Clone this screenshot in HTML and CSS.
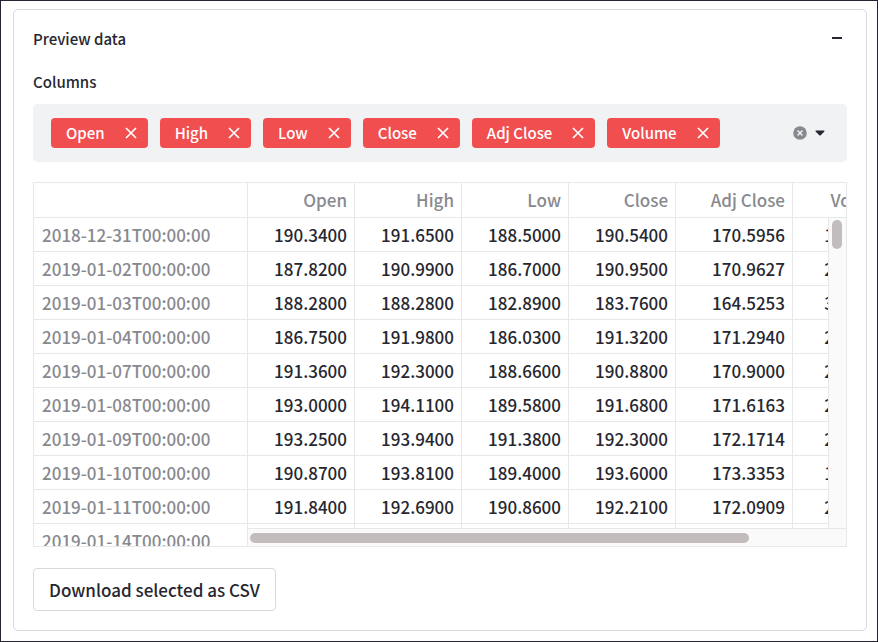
FILE: index.html
```html
<!DOCTYPE html>
<html lang="en">
<head>
<meta charset="utf-8">
<title>Preview data</title>
<link rel="stylesheet" href="styles.css">
</head>
<body>
<svg width="0" height="0" class="sprite" aria-hidden="true">
  <symbol id="cross" viewBox="0 0 12 12"><path d="M1 1L11 11M11 1L1 11" stroke="currentColor" stroke-width="1.7" fill="none"/></symbol>
</svg>
<main class="panel">
  <header class="panel-head">
    <h1 class="title">Preview data</h1>
    <button class="icon-button collapse" aria-label="Collapse"><svg width="10" height="10" viewBox="0 0 10 10"><path d="M0 4H10" stroke="currentColor" stroke-width="2"/></svg></button>
  </header>
  <h2 class="label" id="columns-label">Columns</h2>
  <div class="multiselect" role="group" aria-labelledby="columns-label">
    <ul class="tags">
      <li class="tag">Open<button class="icon-button" aria-label="Remove Open"><svg width="12" height="12"><use href="#cross"/></svg></button></li>
      <li class="tag">High<button class="icon-button" aria-label="Remove High"><svg width="12" height="12"><use href="#cross"/></svg></button></li>
      <li class="tag">Low<button class="icon-button" aria-label="Remove Low"><svg width="12" height="12"><use href="#cross"/></svg></button></li>
      <li class="tag">Close<button class="icon-button" aria-label="Remove Close"><svg width="12" height="12"><use href="#cross"/></svg></button></li>
      <li class="tag">Adj Close<button class="icon-button" aria-label="Remove Adj Close"><svg width="12" height="12"><use href="#cross"/></svg></button></li>
      <li class="tag">Volume<button class="icon-button" aria-label="Remove Volume"><svg width="12" height="12"><use href="#cross"/></svg></button></li>
    </ul>
    <button class="icon-button" aria-label="Clear all"><svg width="14" height="14" viewBox="0 0 14 14"><circle cx="7" cy="7" r="6.8" fill="#88898f"/><path d="M4.6 4.6L9.4 9.4M9.4 4.6L4.6 9.4" stroke="#f0f2f4" stroke-width="1.4"/></svg></button>
    <button class="icon-button" aria-label="Show options"><svg width="10" height="6" viewBox="0 0 10 6"><path d="M1 .5H9Q10 .9 9.2 1.7L5.7 5.2Q5 5.8 4.3 5.2L.8 1.7Q0 .9 1 .5Z" fill="#262730"/></svg></button>
  </div>
  <div class="grid">
    <table>
      <colgroup><col class="c-date"><col><col><col><col><col class="c-adj"><col></colgroup>
      <thead><tr><th></th><th>Open</th><th>High</th><th>Low</th><th>Close</th><th>Adj Close</th><th>Volume</th></tr></thead>
      <tbody>
        <tr><th>2018-12-31T00:00:00</th><td>190.3400</td><td>191.6500</td><td>188.5000</td><td>190.5400</td><td>170.5956</td><td>1866400</td></tr>
        <tr><th>2019-01-02T00:00:00</th><td>187.8200</td><td>190.9900</td><td>186.7000</td><td>190.9500</td><td>170.9627</td><td>2475200</td></tr>
        <tr><th>2019-01-03T00:00:00</th><td>188.2800</td><td>188.2800</td><td>182.8900</td><td>183.7600</td><td>164.5253</td><td>3358200</td></tr>
        <tr><th>2019-01-04T00:00:00</th><td>186.7500</td><td>191.9800</td><td>186.0300</td><td>191.3200</td><td>171.2940</td><td>2995100</td></tr>
        <tr><th>2019-01-07T00:00:00</th><td>191.3600</td><td>192.3000</td><td>188.6600</td><td>190.8800</td><td>170.9000</td><td>2162200</td></tr>
        <tr><th>2019-01-08T00:00:00</th><td>193.0000</td><td>194.1100</td><td>189.5800</td><td>191.6800</td><td>171.6163</td><td>2479800</td></tr>
        <tr><th>2019-01-09T00:00:00</th><td>193.2500</td><td>193.9400</td><td>191.3800</td><td>192.3000</td><td>172.1714</td><td>2290400</td></tr>
        <tr><th>2019-01-10T00:00:00</th><td>190.8700</td><td>193.8100</td><td>189.4000</td><td>193.6000</td><td>173.3353</td><td>1704100</td></tr>
        <tr><th>2019-01-11T00:00:00</th><td>191.8400</td><td>192.6900</td><td>190.8600</td><td>192.2100</td><td>172.0909</td><td>2014700</td></tr>
        <tr><th>2019-01-14T00:00:00</th><td>190.8900</td><td>191.3900</td><td>189.0200</td><td>190.2200</td><td>170.3091</td><td>2275300</td></tr>
      </tbody>
    </table>
    <div class="track track-y"><div class="thumb"></div></div>
    <div class="track track-x"><div class="thumb"></div></div>
  </div>
  <button class="download">Download selected as CSV</button>
</main>
</body>
</html>
```
FILE: styles.css
```css
* { box-sizing: border-box; }

body {
  margin: 0;
  min-height: 100vh;
  padding: 8px 10px 10px 12px;
  border: 1px solid #262432;
  background: #fff;
  color: #262730;
  font: 500 15px/24px "Noto Sans CJK SC", "Noto Sans", sans-serif;
}

.sprite { position: absolute; }

.panel {
  padding: 17px 19px 19px;
  border: 1px solid #dad8d9;
  border-radius: 5px;
}

.panel-head {
  display: flex;
  justify-content: space-between;
  align-items: center;
}

.title, .label {
  margin: 0;
  font-size: 15px;
  font-weight: 500;
}

.label { margin-top: 19px; }

.icon-button {
  display: flex;
  padding: 0;
  border: 0;
  background: none;
  color: inherit;
}

.collapse { margin-right: 5px; }

.multiselect {
  display: flex;
  align-items: center;
  gap: 8px;
  margin-top: 10px;
  padding: 14px 22px 14px 18px;
  border-radius: 5px;
  background: #f0f2f4;
}

.tags {
  display: flex;
  flex: 1;
  gap: 12px;
  margin: 0;
  padding: 0;
  list-style: none;
}

.tag {
  display: flex;
  align-items: center;
  gap: 20px;
  height: 30px;
  padding: 0 11px 0 15px;
  border-radius: 4px;
  background: #f04e4f;
  color: #fff;
  white-space: nowrap;
}

.grid {
  position: relative;
  height: 365px;
  margin-top: 20px;
  overflow: hidden;
  border: 1px solid #e6e8ea;
}

table {
  table-layout: fixed;
  width: 866px;
  border-collapse: separate;
  border-spacing: 0;
  font-size: 17px;
}

col { width: 107px; }
.c-date { width: 214px; }
.c-adj { width: 117px; }

th, td {
  height: 34px;
  padding: 0 7px 0 8px;
  border: solid #e6e8ea;
  border-width: 0 1px 1px 0;
  text-align: right;
  font-weight: 500;
}

thead th { height: 35px; }

th { color: #88898f; }

tbody th { text-align: left; }

.track {
  position: absolute;
  border: 1px solid #e8e8e8;
  background: #fafafa;
}

.track-y {
  top: 35px;
  right: 0;
  bottom: 0;
  width: 18px;
  padding: 2px 3px;
  border-width: 0 0 0 1px;
}

.track-x {
  left: 214px;
  right: 0;
  bottom: 0;
  height: 18px;
  padding: 4px 2px;
  border-width: 1px 0 0;
}

.thumb {
  border-radius: 5px;
  background: #c2bcbc;
}

.track-y .thumb { width: 10px; height: 29px; }
.track-x .thumb { width: 84%; height: 10px; }

.download {
  display: block;
  height: 43px;
  margin-top: 21px;
  padding: 0 15px;
  border: 1px solid #dad8d9;
  border-radius: 4px;
  background: #fff;
  color: inherit;
  font: inherit;
  font-size: 17px;
}
```
